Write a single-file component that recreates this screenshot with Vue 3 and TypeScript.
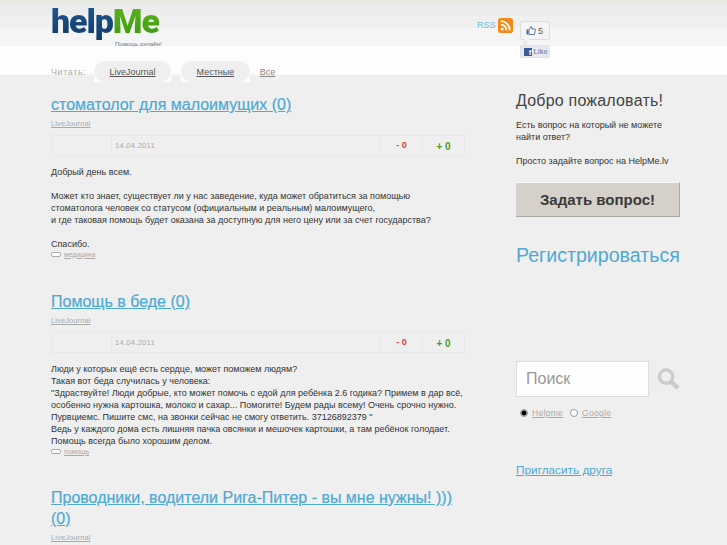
<script setup lang="ts">
interface Post {
  title: string
  lines: string[]
  tag?: string
  gapAfter: boolean
}

const posts: Post[] = [
  {
    title: 'стоматолог для малоимущих (0)',
    lines: [
      'Добрый день всем.',
      '',
      'Может кто знает, существует ли у нас заведение, куда может обратиться за помощью',
      'стоматолога человек со статусом (официальным и реальным) малоимущего,',
      'и где таковая помощь будет оказана за доступную для него цену или за счет государства?',
      '',
      'Спасибо.',
    ],
    tag: 'медицина',
    gapAfter: true,
  },
  {
    title: 'Помощь в беде (0)',
    lines: [
      'Люди у которых ещё есть сердце, может поможем людям?',
      'Такая вот беда случилась у человека:',
      '"Здраствуйте! Люди добрые, кто может помочь с едой для ребёнка 2.6 годика? Примем в дар всё,',
      'особенно нужна картошка, молоко и сахар... Помогите! Будем рады всему! Очень срочно нужно.',
      'Пурвциемс. Пишите смс, на звонки сейчас не смогу ответить. 37126892379 "',
      'Ведь у каждого дома есть лишняя пачка овсянки и мешочек картошки, а там ребёнок голодает.',
      'Помощь всегда было хорошим делом.',
    ],
    tag: 'помощь',
    gapAfter: true,
  },
  {
    title: 'Проводники, водители Рига-Питер - вы мне нужны! ))) (0)',
    lines: [],
    gapAfter: false,
  },
]
</script>

<template>
  <div class="page">
    <header class="header">
      <div class="header__top">
        <div class="logo">
          <div class="logo__word"><span class="logo__help">help</span><span class="logo__me">Me</span></div>
          <div class="logo__tagline">Помощь онлайн!</div>
        </div>
        <div class="social">
          <a class="rss" href="#">RSS</a>
          <svg class="rss-icon" viewBox="0 0 16 16" width="15" height="15">
            <rect width="16" height="16" rx="3" fill="#f28a1a" />
            <circle cx="4.400" cy="11.800" r="1.600" fill="#fff" />
            <path d="M3 7a6 6 0 0 1 6 6" fill="none" stroke="#fff" stroke-width="1.900" />
            <path d="M3 3.400a9.600 9.600 0 0 1 9.600 9.600" fill="none" stroke="#fff" stroke-width="1.900" />
          </svg>
          <div class="fb">
            <div class="fb__count">
              <svg viewBox="0 0 10 9" width="10" height="9">
                <rect x="0.500" y="3.500" width="2" height="5" fill="#4c68a4" />
                <path d="M3 4l2-3.500c1 0 1 1 .7 2.500H9c.6 0 .6 1 .2 1.500L8.500 8.500H3z" fill="#fff" stroke="#4c68a4" stroke-width="0.900" />
              </svg>
              <span>5</span>
            </div>
            <div class="fb__like"><span class="fb__f">f</span><span>Like</span></div>
          </div>
        </div>
      </div>
      <nav class="tabs">
        <span class="tabs__label">Читать:</span>
        <span class="tab-wrap"><a class="tab" href="#">LiveJournal</a></span>
        <span class="tab-wrap"><a class="tab" href="#">Местные</a></span>
        <a class="tabs__all" href="#">Все</a>
      </nav>
    </header>

    <div class="columns">
      <main class="feed">
        <article v-for="post in posts" :key="post.title" :class="['post', { 'post--gap': post.gapAfter }]">
          <h2 class="post__title"><a href="#">{{ post.title }}</a></h2>
          <a class="post__source" href="#">LiveJournal</a>
          <template v-if="post.gapAfter">
            <div class="meta">
              <div class="meta__blank"></div>
              <div class="meta__date">14.04.2011</div>
              <div class="meta__minus">- 0</div>
              <div class="meta__plus">+ 0</div>
            </div>
            <div class="post__body">
              <p v-for="(line, i) in post.lines" :key="i">{{ line || '\u00a0' }}</p>
            </div>
            <div class="post__tag">
              <span class="tag-icon"></span>
              <a href="#">{{ post.tag }}</a>
            </div>
          </template>
        </article>
      </main>

      <aside class="side">
        <h3 class="side__welcome">Добро пожаловать!</h3>
        <p class="side__text">Есть вопрос на который не можете найти ответ?</p>
        <p class="side__text side__text--next">Просто задайте вопрос на HelpMe.lv</p>
        <button class="ask" type="button">Задать вопрос!</button>
        <a class="register" href="#">Регистрироваться</a>
        <div class="search">
          <input class="search__input" type="text" placeholder="Поиск" />
          <svg class="search__icon" viewBox="0 0 24 24" width="24" height="24">
            <circle cx="9.500" cy="9.500" r="7" fill="none" stroke="#ccc" stroke-width="3.600" />
            <path d="M14.500 14.500L22 21.500" stroke="#ccc" stroke-width="4.600" fill="none" />
          </svg>
        </div>
        <div class="engines">
          <span class="radio radio--on"></span>
          <a href="#">Helpme</a>
          <span class="radio"></span>
          <a href="#">Google</a>
        </div>
        <a class="invite" href="#">Пригласить друга</a>
      </aside>
    </div>
  </div>
</template>

<style>
html,
body {
  margin: 0;
  overflow: hidden;
  background: #efefef;
}
</style>

<style scoped>
.page {
  height: 545px;
  overflow: hidden;
  font-family: 'Liberation Sans', Arial, sans-serif;
  color: #333;
  background: #efefef;
}

a {
  color: inherit;
}

.header {
  height: 75px;
  box-sizing: border-box;
  padding: 0 0 0 51px;
  background: linear-gradient(
    #e8ebe2 0,
    #e8ebe2 5px,
    #ececec 5px,
    #ececec 15px,
    #f0f0f0 15px,
    #f0f0f0 28px,
    #f5f5f6 28px,
    #f5f5f6 46px,
    #fdfdfd 46px,
    #fdfdfd 74px,
    #f8f8f8 74px
  );
}

.header__top {
  height: 61px;
  display: flex;
  align-items: flex-start;
}

.logo {
  width: 426px;
  padding-top: 1px;
}

.logo__word {
  font: 900 34px/40px Roboto, sans-serif;
  letter-spacing: -1.1px;
}

.logo__help {
  background: linear-gradient(#1f5a92, #123a6b);
  -webkit-background-clip: text;
  background-clip: text;
  color: transparent;
}

.logo__me {
  background: linear-gradient(#62b51f, #379a10);
  -webkit-background-clip: text;
  background-clip: text;
  color: transparent;
}

.logo__tagline {
  margin: 0 0 0 64px;
  font-size: 6px;
  line-height: 6px;
  color: #777;
}

.social {
  display: flex;
  align-items: flex-start;
  padding-top: 18px;
}

.rss {
  font-size: 9px;
  line-height: 14px;
  color: #74bbd8;
  text-decoration: none;
  margin-right: 2px;
}

.rss-icon {
  margin-right: 7px;
}

.fb {
  margin-top: 3px;
  width: 30px;
}

.fb__count {
  position: relative;
  height: 19px;
  box-sizing: border-box;
  border: 1px solid #dfdfdf;
  border-radius: 2px;
  background: #f4f4f4;
  display: flex;
  align-items: center;
  justify-content: center;
  gap: 2px;
  font-size: 9px;
  color: #555;
}

.fb__count::after {
  content: '';
  position: absolute;
  left: 3px;
  bottom: -4px;
  width: 4px;
  height: 4px;
  background: #f4f4f4;
  border-left: 1px solid #dfdfdf;
  border-bottom: 1px solid #dfdfdf;
  transform: skewY(-40deg);
}

.fb__like {
  margin-top: 5px;
  height: 13px;
  border-radius: 2px;
  background: #e4e9f2;
  border: 1px solid #dde3ee;
  box-sizing: border-box;
  display: flex;
  align-items: center;
  gap: 2px;
  padding-left: 3px;
  font-size: 7px;
  font-weight: 700;
  color: #7d92bd;
}

.fb__f {
  width: 8px;
  height: 8px;
  background: #3b5998;
  color: #fff;
  font-size: 8px;
  line-height: 9px;
  text-align: right;
  overflow: hidden;
}

.tabs {
  display: flex;
  align-items: flex-start;
  height: 21px;
  font-size: 9px;
  color: #aaa;
}

.tabs__label {
  line-height: 23px;
  letter-spacing: 0.6px;
  width: 43px;
}

.tab-wrap {
  height: 21px;
  margin-right: 10px;
  background: #fff;
}

.tab {
  display: block;
  height: 21px;
  line-height: 23px;
  padding: 0 15.500px;
  border-radius: 11px;
  background: #efefef;
  color: #555;
}

.tabs__all {
  line-height: 23px;
  color: #888;
}

.columns {
  display: flex;
  padding: 19px 47px 0 51px;
  gap: 51px;
}

.feed {
  width: 414px;
  flex: none;
}

.post--gap {
  padding-bottom: 33px;
}

.post:last-child {
  margin-top: -1px;
}

.post__title {
  margin: 0;
  max-width: 410px;
  font-size: 16px;
  font-weight: 400;
  line-height: 21px;
  color: #4ea9d3;
  -webkit-text-stroke: 0.2px #4ea9d3;
}

.post__source {
  display: block;
  margin-top: 4px;
  font-size: 7.500px;
  line-height: 10px;
  color: #aaa;
  letter-spacing: 0.1px;
}

.meta {
  margin-top: 6px;
  height: 21px;
  box-sizing: border-box;
  border: 1px solid #e6e9ec;
  display: grid;
  grid-template-columns: 59px 269px 42px 1fr;
}

.meta > div + div {
  border-left: 1px solid #e6e9ec;
}

.meta__date {
  padding-left: 3px;
  font-size: 7.500px;
  line-height: 19px;
  letter-spacing: 0.3px;
  color: #aaa;
}

.meta__minus {
  text-align: center;
  color: #e4343b;
  font-size: 9px;
  font-weight: 700;
  line-height: 19px;
}

.meta__plus {
  text-align: center;
  color: #4c9c18;
  font-size: 10px;
  font-weight: 700;
  line-height: 21px;
}

.post__body {
  margin-top: 10px;
  font-size: 9px;
  line-height: 12px;
  color: #333;
  white-space: nowrap;
}

.post__body p {
  margin: 0;
}

.post__tag {
  display: flex;
  align-items: center;
  gap: 3px;
  height: 8px;
  font-size: 6.800px;
  color: #aaa;
}

.tag-icon {
  width: 8px;
  height: 3px;
  border: 1px solid #aaa;
  border-radius: 2px;
  background: #fff;
}

.side {
  width: 164px;
  flex: none;
}

.side__welcome {
  margin: -3px 0 0;
  font-size: 16px;
  font-weight: 400;
  line-height: 20px;
  letter-spacing: 0.2px;
  color: #444;
}

.side__text {
  margin: 8px 0 0;
  font-size: 9px;
  line-height: 12px;
  color: #333;
}

.side__text--next {
  margin-top: 12px;
}

.ask {
  display: block;
  width: 164px;
  height: 35px;
  margin-top: 15px;
  padding: 0;
  border: 0;
  border-top: 1px solid #f8f8f8;
  border-bottom: 1px solid #aaa6a0;
  border-right: 1px solid #aaa6a0;
  background: #d5d0c9;
  color: #3a3a3a;
  font: 700 15px 'Liberation Sans', Arial, sans-serif;
}

.register {
  display: block;
  margin-top: 26px;
  font-size: 19.600px;
  line-height: 24px;
  color: #4ea9d3;
  text-decoration: none;
  white-space: nowrap;
}

.search {
  display: flex;
  align-items: center;
  gap: 8px;
  margin-top: 94px;
}

.search__input {
  width: 133px;
  height: 36px;
  box-sizing: border-box;
  border: 1px solid #dcdcdc;
  background: #fefefe;
  padding: 0 0 0 9px;
  font: 16px 'Liberation Sans', Arial, sans-serif;
  outline: none;
}

.search__input::placeholder {
  color: #999;
  opacity: 1;
}

.engines {
  display: flex;
  align-items: center;
  gap: 4px;
  margin: 10px 0 0 4px;
  font-size: 8.500px;
  letter-spacing: 0.3px;
  color: #aaa;
  line-height: 12px;
}

.radio {
  width: 6px;
  height: 6px;
  border: 1px solid #999;
  border-radius: 50%;
  background: #fff;
}

.radio--on {
  background: radial-gradient(circle, #000 0 2px, #ccc 3px);
}

.engines a + .radio {
  margin-left: 3px;
}

.invite {
  display: block;
  margin-top: 43px;
  font-size: 11.800px;
  line-height: 16px;
  color: #4ea9d3;
}
</style>
